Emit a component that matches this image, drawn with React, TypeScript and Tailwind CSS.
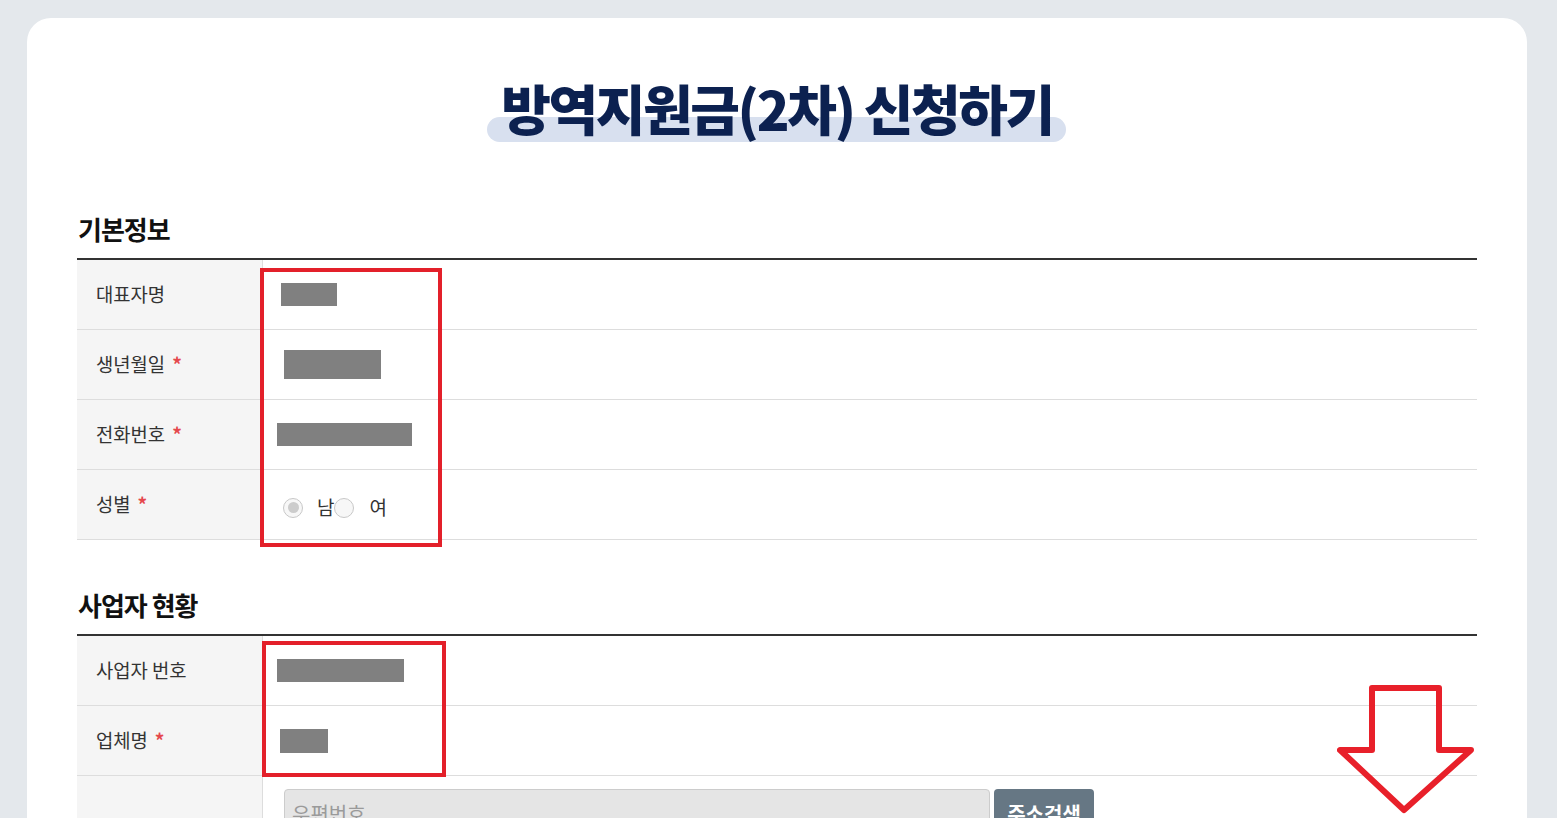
import React from "react";

const font = { fontFamily: '"Noto Sans CJK KR", "Noto Sans", sans-serif' };

function Star() {
  return <span className="ml-[7px] text-[#e5484d] font-bold text-[19px]">*</span>;
}

function Row({ label, star, children, h = "h-[70px]" }: { label: string; star?: boolean; children?: React.ReactNode; h?: string }) {
  return (
    <div className={`flex ${h} border-b border-[#dddddd]`}>
      <div className="w-[186px] shrink-0 bg-[#f5f5f5] border-r border-[#dddddd] flex items-center pl-[19px] text-[18.8px] text-[#333333]">
        {label}
        {star && <Star />}
      </div>
      <div className="flex-1 flex items-center">{children}</div>
    </div>
  );
}

function Gray({ w, h, ml }: { w: string; h: string; ml: string }) {
  return <div className={`${w} ${h} ${ml} bg-[#808080]`} />;
}

function Radio({ checked }: { checked?: boolean }) {
  return (
    <span className="w-[20px] h-[20px] rounded-full border border-[#c8c8c8] bg-[#f7f7f7] flex items-center justify-center">
      {checked && <span className="w-[11px] h-[11px] rounded-full bg-[#cccccc]" />}
    </span>
  );
}

export default function App() {
  return (
    <div className="min-h-[1100px] bg-[#e4e8ec] pt-[18px] px-[27px] pr-[30px]" style={font}>
      <div className="bg-white rounded-[24px] min-h-[1100px] px-[50px] pt-[58px]">
        <div className="flex justify-center">
          <div className="relative">
            <div className="absolute left-[-14px] right-[-13px] top-[41px] h-[25px] rounded-full bg-[#d8e0ef]" />
            <h1 className="relative text-[54px] leading-[64px] font-black text-[#0c2150] tracking-[-2.4px]">
              방역지원금(2차) 신청하기
            </h1>
          </div>
        </div>

        <h2 className="mt-[74px] text-[26px] leading-[30px] font-bold text-[#111111] tracking-[-1px] pl-px">기본정보</h2>
        <div className="relative mt-[14px] border-t-2 border-[#333333]">
          <Row label="대표자명">
            <Gray w="w-[56px]" h="h-[23px]" ml="ml-[18px]" />
          </Row>
          <Row label="생년월일" star>
            <Gray w="w-[97px]" h="h-[29px]" ml="ml-[21px]" />
          </Row>
          <Row label="전화번호" star>
            <Gray w="w-[135px]" h="h-[23px]" ml="ml-[14px]" />
          </Row>
          <Row label="성별" star>
            <div className="flex items-center ml-[20px] mt-[6px] text-[19px] text-[#333333]">
              <Radio checked />
              <span className="ml-[14px]">남</span>
              <Radio />
              <span className="ml-[15px]">여</span>
            </div>
          </Row>
          <div className="absolute left-[183px] top-[8px] w-[182px] h-[279px] border-4 border-[#e3202a]" />
        </div>

        <h2 className="mt-[50px] text-[26px] leading-[30px] font-bold text-[#111111] tracking-[-1px] pl-px">사업자 현황</h2>
        <div className="relative mt-[14px] border-t-2 border-[#333333]">
          <Row label="사업자 번호">
            <Gray w="w-[127px]" h="h-[23px]" ml="ml-[14px]" />
          </Row>
          <Row label="업체명" star>
            <Gray w="w-[48px]" h="h-[24px]" ml="ml-[17px]" />
          </Row>
          <div className="flex h-[160px] border-b border-[#dddddd]">
            <div className="w-[186px] shrink-0 bg-[#f5f5f5] border-r border-[#dddddd]" />
            <div className="flex-1 pt-[13px] pl-[21px]">
              <div className="flex gap-[4px]">
                <div className="w-[706px] h-[46px] rounded-[4px] border border-[#cccccc] bg-[#e5e5e5] flex items-center pl-[7px] pt-[4px] text-[20px] text-[#9a9a9a]">
                  우편번호
                </div>
                <button className="w-[100px] h-[46px] rounded-[4px] bg-[#667784] text-white text-[20px] font-bold pt-[4px]">
                  주소검색
                </button>
              </div>
            </div>
          </div>
          <div className="absolute left-[185px] top-[5px] w-[184px] h-[136px] border-4 border-[#e3202a]" />
          <svg className="absolute left-[1260px] top-[48px]" width="140" height="130" viewBox="0 0 140 130">
            <path
              d="M35 4 L102 4 L102 66 L134 66 L67 126 L3 66 L35 66 Z"
              fill="none"
              stroke="#e8202a"
              strokeWidth="6"
              strokeLinejoin="round"
            />
          </svg>
        </div>
      </div>
    </div>
  );
}
